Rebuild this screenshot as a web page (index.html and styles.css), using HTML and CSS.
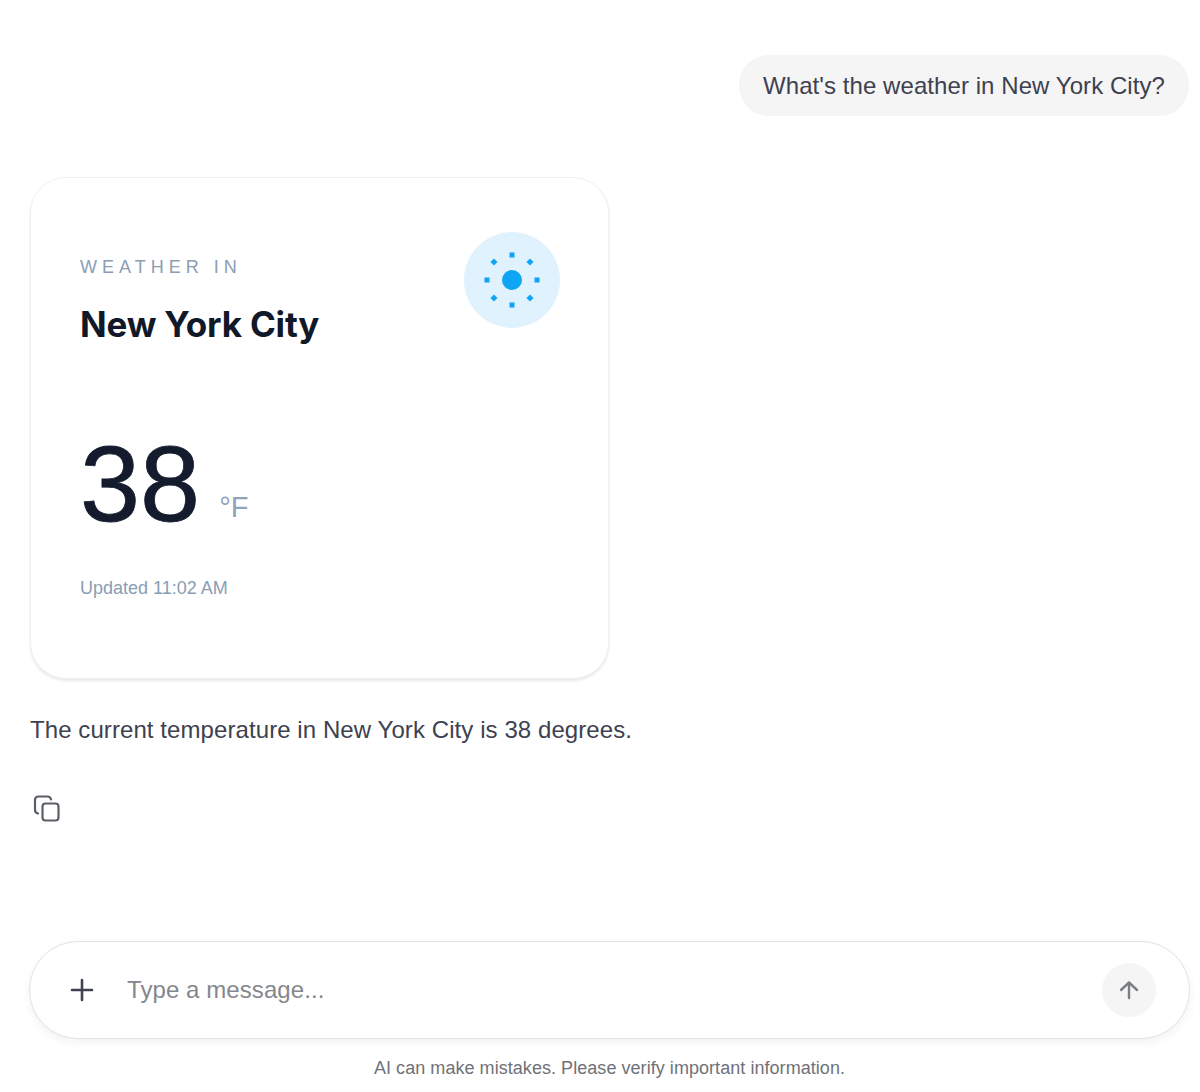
FILE: index.html
```html
<!DOCTYPE html>
<html lang="en">
<head>
  <meta charset="UTF-8">
  <meta name="viewport" content="width=device-width, initial-scale=1.0">
  <title>Weather Chat</title>
  <link rel="stylesheet" href="styles.css">
</head>
<body>
  <div class="frame">
    <div class="thread">
      <div class="user-row">
        <div class="bubble">What's the weather in New York City?</div>
      </div>
      <div class="card">
        <div class="card-top">
          <div>
            <div class="label">WEATHER IN</div>
            <div class="city">New York City</div>
          </div>
          <div class="sun">
            <svg width="56" height="56" viewBox="0 0 56 56">
              <circle cx="28" cy="28" r="10" fill="#0ea5f5"/>
              <g fill="#0ea5f5">
                <rect x="25.5" y="0.5" width="5" height="5"/>
                <rect x="25.5" y="50.5" width="5" height="5"/>
                <rect x="0.5" y="25.5" width="5" height="5"/>
                <rect x="50.5" y="25.5" width="5" height="5"/>
                <rect x="7.5" y="7.5" width="5" height="5" transform="rotate(45 10 10)"/>
                <rect x="43.5" y="7.5" width="5" height="5" transform="rotate(45 46 10)"/>
                <rect x="7.5" y="43.5" width="5" height="5" transform="rotate(45 10 46)"/>
                <rect x="43.5" y="43.5" width="5" height="5" transform="rotate(45 46 46)"/>
              </g>
            </svg>
          </div>
        </div>
        <div class="temp">
          <span class="deg">38</span>
          <span class="unit">°F</span>
        </div>
        <div class="updated">Updated 11:02 AM</div>
      </div>
      <p class="reply">The current temperature in New York City is 38 degrees.</p>
      <button class="copy" aria-label="Copy">
        <svg width="28" height="28" viewBox="0 0 28 28" fill="none" stroke="#5b5f68" stroke-width="2.2" stroke-linecap="round" stroke-linejoin="round">
          <rect x="9.5" y="8.5" width="16" height="17" rx="3"/>
          <path d="M5 18.5c-1.600-.3-3-1.600-3-3.500V5c0-2 1.500-3.500 3.500-3.500h9c1.800 0 3.200 1.200 3.500 3"/>
        </svg>
      </button>
    </div>
    <div class="composer">
      <button class="plus" aria-label="Add">
        <svg width="24" height="24" viewBox="0 0 24 24" fill="none" stroke="#3d4150" stroke-width="2.600" stroke-linecap="round">
          <path d="M12 2v20M2 12h20"/>
        </svg>
      </button>
      <div class="placeholder">Type a message...</div>
      <button class="send" aria-label="Send">
        <svg width="22" height="22" viewBox="0 0 22 22" fill="none" stroke="#7b7e85" stroke-width="2.400" stroke-linecap="round" stroke-linejoin="round">
          <path d="M11 19V3.500M3 11l8-7.500 8 7.500"/>
        </svg>
      </button>
    </div>
    <div class="note">AI can make mistakes. Please verify important information.</div>
  </div>
</body>
</html>
```
FILE: styles.css
```css
html, body { height: 100%; }
body { font-family: "Liberation Sans", Arial, sans-serif; margin: 0; padding: 0; background: #fff; color: #3d4150; }
.frame { box-sizing: border-box; height: 1092px; padding: 55px 10px 13px 29px; border-radius: 40px; box-shadow: inset 0 0 0 1px #fdfdfd; display: flex; flex-direction: column; overflow: hidden; }
.thread { flex: 1; display: flex; flex-direction: column; align-items: flex-start; padding-left: 1px; }
.user-row { align-self: stretch; display: flex; justify-content: flex-end; margin-right: 1px; }
.bubble { background: #f5f5f6; border-radius: 30px; height: 61px; line-height: 61px; padding: 0 24px; font-size: 24px; letter-spacing: 0.07px; }
.card { box-sizing: border-box; width: 579px; height: 502px; margin-top: 61px; padding: 54px 48px 0 49px; border: 1px solid #f0f0f2; border-radius: 36px; box-shadow: 0 2px 3px rgba(0, 0, 0, 0.09); background: #fff; }
.card-top { display: flex; justify-content: space-between; align-items: flex-start; height: 162px; }
.label { font-size: 18px; letter-spacing: 5px; color: #8a9db5; margin-top: 25px; line-height: 20px; }
.city { font-family: Inter, "Liberation Sans", sans-serif; font-size: 35px; font-weight: 700; color: #111827; margin-top: 26px; line-height: 42px; letter-spacing: -0.2px; }
.sun { width: 96px; height: 96px; border-radius: 50%; background: #e0f2fe; display: flex; align-items: center; justify-content: center; }
.temp { display: flex; align-items: flex-end; gap: 19px; margin-top: 35px; }
.deg { font-size: 108px; line-height: 110px; color: #141b2d; -webkit-text-stroke: 0.8px #141b2d; }
.unit { font-size: 29px; line-height: 30px; color: #8fa3ba; margin-bottom: 17px; }
.updated { font-size: 18px; color: #8a9db5; margin-top: 39px; }
.reply { margin: 36px 0 0; font-size: 24px; line-height: 30px; letter-spacing: 0.08px; }
.copy { background: none; border: 0; padding: 0; margin: 50px 0 0 3px; width: 28px; height: 28px; }
.composer { box-sizing: border-box; height: 98px; display: flex; align-items: center; padding: 0 33px 0 40px; border: 1px solid #e2e2e4; border-radius: 49px; box-shadow: 0 4px 8px rgba(0, 0, 0, 0.05); background: #fff; }
.plus { background: none; border: 0; padding: 0; width: 24px; height: 24px; }
.placeholder { flex: 1; margin-left: 33px; font-size: 24px; letter-spacing: 0.08px; color: #85878d; }
.send { width: 54px; height: 54px; border: 0; padding: 0; border-radius: 50%; background: #f5f5f6; display: flex; align-items: center; justify-content: center; }
.note { text-align: center; font-size: 18px; letter-spacing: 0.05px; color: #6f7178; margin-top: 19px; }
```
